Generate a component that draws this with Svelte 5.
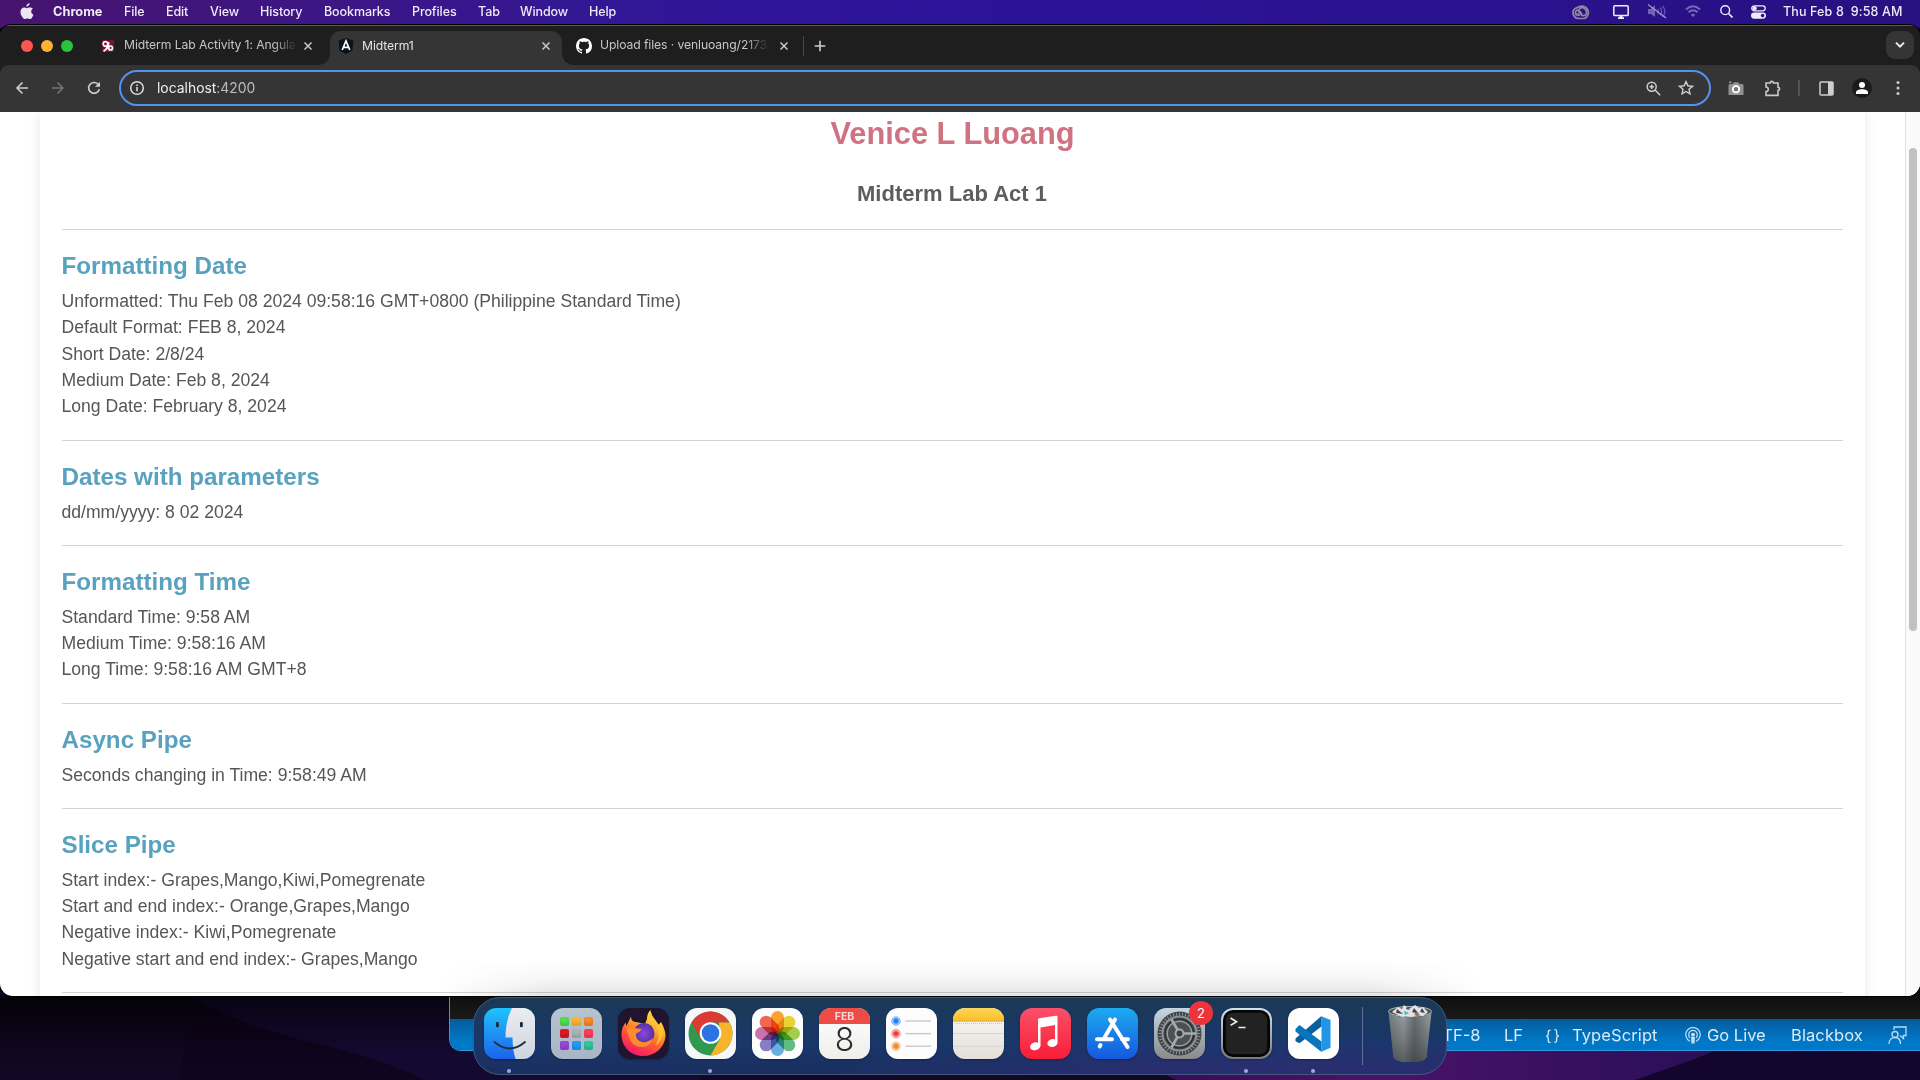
<script>
  const menus = ['File', 'Edit', 'View', 'History', 'Bookmarks', 'Profiles', 'Tab', 'Window', 'Help'];

  const sections = [
    {
      title: 'Formatting Date',
      lines: [
        'Unformatted: Thu Feb 08 2024 09:58:16 GMT+0800 (Philippine Standard Time)',
        'Default Format: FEB 8, 2024',
        'Short Date: 2/8/24',
        'Medium Date: Feb 8, 2024',
        'Long Date: February 8, 2024'
      ]
    },
    { title: 'Dates with parameters', lines: ['dd/mm/yyyy: 8 02 2024'] },
    {
      title: 'Formatting Time',
      lines: ['Standard Time: 9:58 AM', 'Medium Time: 9:58:16 AM', 'Long Time: 9:58:16 AM GMT+8']
    },
    { title: 'Async Pipe', lines: ['Seconds changing in Time: 9:58:49 AM'] },
    {
      title: 'Slice Pipe',
      lines: [
        'Start index:- Grapes,Mango,Kiwi,Pomegrenate',
        'Start and end index:- Orange,Grapes,Mango',
        'Negative index:- Kiwi,Pomegrenate',
        'Negative start and end index:- Grapes,Mango'
      ]
    }
  ];

  const petals = ['#ff9a1f', '#e9d21c', '#9ccb3c', '#4fb878', '#58a8e0', '#7d6fc0', '#c565a5', '#f2583e'];
  const pads = ['#4fe04a', '#ffb52e', '#f98a25', '#d81a26', '#a9b3b8', '#ff3b5c', '#9a45d8', '#1e9bf5', '#2cc79c'];
  const teeth = Array.from({ length: 40 }, (_, i) => i * 9);
</script>

{#snippet closeIcon()}
  <svg class="close" width="10" height="10" viewBox="0 0 10 10"><path d="M1.5 1.5l7 7M8.5 1.5l-7 7" stroke="#c9c9c9" stroke-width="1.5" fill="none" /></svg>
{/snippet}

<div class="desktop">
  <svg class="wallpaper" width="1920" height="84" viewBox="0 0 1920 84">
    <defs>
      <linearGradient id="wl" x1="0" y1="0" x2="0" y2="1"><stop offset="0" stop-color="#0c0518" /><stop offset="1" stop-color="#130725" /></linearGradient>
      <linearGradient id="wp" x1="0" y1="0" x2="1" y2="0"><stop offset="0" stop-color="#2b0c48" /><stop offset=".45" stop-color="#4b126a" /><stop offset="1" stop-color="#240e55" /></linearGradient>
      <linearGradient id="ws" x1="0" y1="0" x2="0" y2="1"><stop offset="0" stop-color="#000" stop-opacity=".65" /><stop offset=".7" stop-color="#000" stop-opacity="0" /></linearGradient>
    </defs>
    <rect width="1920" height="84" fill="url(#wl)" />
    <path d="M190 0 Q240 30 310 46 T425 84 H180 Z" fill="#0f041a" opacity=".6" />
    <path d="M190 0 Q240 30 310 46 T425 84 H700 V0 Z" fill="#140930" />
    <rect width="1920" height="84" fill="url(#ws)" />
    <path d="M1160 76 Q1120 40 1060 20 L1760 20 L1710 57 Q1680 69 1636 84 H1176 Z" fill="url(#wp)" />
    <path d="M1720 55 H1920 V84 H1636 Q1680 68 1720 55Z" fill="#14052e" />
  </svg>

  <header class="menubar">
    <svg class="apple" width="14" height="17" viewBox="0 0 14 17"><path fill="#ece4f5" d="M9.6 0c.1 1-.3 1.9-.9 2.6-.6.7-1.4 1.2-2.3 1.1C6.300 2.800 6.800 1.900 7.300 1.300 7.900.6 8.900.1 9.600 0zM12.900 5.700c-1.200.8-1.700 1.700-1.700 2.900 0 1.500.9 2.600 2.200 3.100-.3.900-.8 1.900-1.400 2.700-.6.9-1.200 1.700-2.200 1.700-.9 0-1.300-.6-2.500-.6s-1.600.6-2.500.6-1.600-.9-2.300-1.800C1.200 12.600.5 10.800.5 9 .5 6.200 2.300 4.600 4.100 4.600c1.100 0 1.900.7 2.700.7.700 0 1.700-.7 3-.7 1.200 0 2.400.4 3.100 1.100z" /></svg>
    <strong>Chrome</strong>
    {#each menus as item}<span class={['menu', item.toLowerCase()]}>{item}</span>{/each}
    <div class="status">
      <svg width="20" height="16" viewBox="0 0 20 16"><g fill="none" stroke="#94899f" stroke-width="1.7"><path d="M6.500 14.500A5.800 5.800 0 0 1 2 5.500C4 3.500 5.500 3.500 6.500 3A6.500 6.500 0 1 1 12.500 14.500Z" /><path d="M5 11.500A3 3 0 0 1 5 6.200c2.500-.6 3 2 5 4M8 11.500c-1.700 0-2.500-1-2.500-2.200M7 5.500c1.500-2.500 5-2.500 7 .5 1 2 1 3.500-.5 5-1.500 1-3.500.7-4.700-.8L6.500 7.500" /></g></svg>
      <svg class="display" width="16" height="14" viewBox="0 0 16 14"><rect x=".8" y=".8" width="14.400" height="9.800" rx="1.200" fill="none" stroke="#f0edfa" stroke-width="1.500" /><path d="M6.500 10.500h3v1.800h1.500V14h-6v-1.700h1.500z" fill="#f0edfa" /></svg>
      <svg class="mute" width="20" height="15" viewBox="0 0 20 15"><path d="M1 5h3l4-4v12L4 10H1z" fill="#7162b5" /><path d="M10.500 5q2 2.500 0 5M13 3.500q3.500 4 0 8M15.500 2q5 5.500 0 11" stroke="#6253ac" stroke-width="1.400" fill="none" /><path d="M1 .5l18 13.500" stroke="#a49bd0" stroke-width="1.200" /></svg>
      <svg class="wifi" width="16" height="13" viewBox="0 0 16 13"><path d="M1 4.500Q8-1.800 15 4.500M3.500 7.300q4.500-4 9 0" stroke="#7768bb" stroke-width="1.900" fill="none" /><path d="M5.700 9.700q2.300-2 4.600 0L8 12z" fill="#7768bb" /></svg>
      <svg class="search" width="13" height="13" viewBox="0 0 13 13"><circle cx="5.200" cy="5.200" r="4.400" stroke="#f0edfa" stroke-width="1.400" fill="none" /><path d="M8.500 8.500l4 4" stroke="#f0edfa" stroke-width="1.600" /></svg>
      <svg class="control" width="15" height="14" viewBox="0 0 15 14"><rect x=".8" y=".8" width="13.400" height="5" rx="2.500" stroke="#f0edfa" stroke-width="1.300" fill="none" /><circle cx="3.700" cy="3.300" r="2" fill="#f0edfa" /><rect x="0" y="7.500" width="15" height="6.200" rx="3.100" fill="#f0edfa" /><circle cx="11.600" cy="10.600" r="1.800" fill="#29128e" /></svg>
      <span class="clock">Thu Feb 8&nbsp; 9:58 AM</span>
    </div>
  </header>

  <div class="editor">
    <div class="terminal"></div>
    <footer>
      <span class="enc">UTF-8</span>
      <span class="lf">LF</span>
      <span class="braces">{'{ }'}</span>
      <span class="lang">TypeScript</span>
      <svg class="live" width="16" height="17" viewBox="0 0 16 17"><g fill="none" stroke="#c7deef" stroke-width="1.200"><path d="M5 14.200a7.200 7.200 0 1 1 6 0" /><path d="M5 10.800a4.300 4.300 0 1 1 6 0" /></g><circle cx="8" cy="7.700" r="2" fill="#c7deef" /><path d="M6 10h4l-.5 6.500h-3z" fill="#c7deef" /></svg>
      <span class="golive">Go Live</span>
      <span class="blackbox">Blackbox</span>
      <svg class="feedback" width="19" height="19" viewBox="0 0 19 19" fill="none" stroke="#bfd9ee" stroke-width="1.300"><path d="M6 4V1h12v8.500h-2.500v3L12 9.500" /><circle cx="7" cy="8.500" r="3" /><path d="M1 18c0-4 2.500-6.500 6-6.500s5.500 2.500 5.500 6.500" /></svg>
    </footer>
  </div>

  <main class="browser">
    <div class="tabstrip">
      <div class="lights"><i class="red"></i><i class="amber"></i><i class="green"></i></div>
      <div class="tab first">
        <svg width="12" height="12" viewBox="0 0 12 12"><rect width="12" height="12" rx="1" fill="#7c1033" /><g fill="none" stroke="#fff" stroke-width="1.700"><circle cx="3.500" cy="4" r="2.300" /><path d="M5.800 3.500C6 7.500 4 10 1.500 11.300M6.500 2v7" /><circle cx="8.500" cy="8" r="2" /></g></svg>
        <span class="title faded">Midterm Lab Activity 1: Angula</span>
        {@render closeIcon()}
      </div>
      <div class="tab active">
        <svg width="16" height="16" viewBox="0 0 16 16"><path d="M8 0l7.500 2.700-1.200 10L8 16l-6.300-3.300-1.200-10z" fill="#07131f" /><path d="M4.200 12L8 3l3.800 9M5.500 9.300h5" fill="none" stroke="#fff" stroke-width="1.700" /></svg>
        <span class="title">Midterm1</span>
        {@render closeIcon()}
      </div>
      <div class="tab third">
        <svg width="16" height="16" viewBox="0 0 16 16"><path fill="#fff" d="M8 0C3.580 0 0 3.580 0 8c0 3.540 2.290 6.530 5.470 7.590.4.070.550-.170.550-.380 0-.190-.010-.820-.010-1.490-2.010.370-2.530-.490-2.690-.940-.090-.230-.480-.940-.820-1.130-.280-.150-.680-.520-.010-.530.630-.010 1.080.580 1.230.820.720 1.210 1.870.870 2.330.660.070-.520.280-.870.510-1.070-1.780-.200-3.640-.890-3.640-3.950 0-.870.310-1.590.820-2.150-.080-.200-.360-1.020.080-2.120 0 0 .670-.210 2.200.820.640-.180 1.320-.270 2-.270s1.360.090 2 .270c1.530-1.040 2.200-.820 2.200-.820.440 1.100.160 1.920.080 2.120.510.560.820 1.270.820 2.150 0 3.070-1.870 3.750-3.650 3.950.290.250.540.730.540 1.480 0 1.070-.010 1.930-.010 2.200 0 .210.150.460.550.380A8.010 8.010 0 0 0 16 8c0-4.420-3.580-8-8-8z" /></svg>
        <span class="title faded">Upload files · venluoang/2173</span>
        {@render closeIcon()}
      </div>
      <i class="sep"></i>
      <svg class="plus" width="12" height="12" viewBox="0 0 12 12"><path d="M6 .7v10.600M.7 6h10.600" stroke="#d0d0d0" stroke-width="1.600" /></svg>
      <div class="chevron"><svg width="12" height="8" viewBox="0 0 12 8"><path d="M2 1.700l4 4 4-4" fill="none" stroke="#eee" stroke-width="1.900" /></svg></div>
    </div>

    <div class="toolbar">
      <div class="slot"><svg width="14" height="14" viewBox="0 0 14 14"><path d="M13 7H2M7.500 1.500L2 7l5.500 5.500" fill="none" stroke="#cfcfcf" stroke-width="1.600" /></svg></div>
      <div class="slot"><svg width="14" height="14" viewBox="0 0 14 14"><path d="M1 7h11M6.500 1.500L12 7l-5.500 5.500" fill="none" stroke="#737373" stroke-width="1.600" /></svg></div>
      <div class="slot"><svg width="14" height="14" viewBox="0 0 14 14"><path d="M12.300 8.200A5.400 5.400 0 1 1 11 3.200l1.200 1.300" fill="none" stroke="#cfcfcf" stroke-width="1.600" /><path d="M13 .7v5H8z" fill="#cfcfcf" /></svg></div>
      <div class="omnibox">
        <svg width="16" height="16" viewBox="0 0 16 16"><circle cx="8" cy="8" r="6.300" fill="none" stroke="#dcdcdc" stroke-width="1.500" /><path d="M8 7v4.300M8 4.400v1.600" stroke="#dcdcdc" stroke-width="1.600" /></svg>
        <p><b>localhost</b>:4200</p>
        <svg width="15" height="15" viewBox="0 0 15 15"><circle cx="5.700" cy="5.700" r="4.500" fill="none" stroke="#cfcfcf" stroke-width="1.500" /><path d="M9 9l5.200 5.200M3.500 5.700h4.400M5.700 3.500v4.400" stroke="#cfcfcf" stroke-width="1.500" /></svg>
        <svg class="star" width="16" height="16" viewBox="0 0 16 16"><path d="M8 1.600l1.900 4.200 4.600.5-3.500 3 1 4.600L8 11.500l-4 2.400 1-4.600-3.500-3 4.600-.5z" fill="none" stroke="#d0d0d0" stroke-width="1.400" /></svg>
      </div>
      <div class="slot camera"><svg width="16" height="15" viewBox="0 0 16 15"><path d="M2 3h2.500l1.300-1.700h4.400L11.500 3H14q1.500 0 1.500 1.500V14H.5V4.500Q.5 3 2 3zM1 .5h2.500v1.700H1z" fill="#929292" /><circle cx="8" cy="8.200" r="3.200" fill="#777" stroke="#fff" stroke-width="1.900" /></svg></div>
      <div class="slot"><svg width="18" height="17" viewBox="0 0 18 17"><path d="M2 3h4.200a1.600 1.600 0 0 1 3.200 0H14v4.200a1.600 1.600 0 0 1 0 3.200v5H2v-3.800a2.200 2.200 0 0 0 0-4.600z" fill="none" stroke="#c9c9c9" stroke-width="1.600" /></svg></div>
      <i class="divider"></i>
      <div class="slot"><svg width="15" height="15" viewBox="0 0 15 15"><rect x="1" y="1" width="13" height="13" rx="1" fill="none" stroke="#cfcfcf" stroke-width="1.500" /><path d="M9 1h5v13H9z" fill="#cfcfcf" /></svg></div>
      <div class="slot"><svg width="20" height="20" viewBox="0 0 20 20"><circle cx="10" cy="10" r="10" fill="#1b1b1b" /><circle cx="10" cy="7" r="3" fill="#fff" /><path d="M4 16v-1.500c0-2 3-3.200 6-3.200s6 1.200 6 3.200V16z" fill="#fff" /></svg></div>
      <div class="slot"><svg width="4" height="16" viewBox="0 0 4 16" fill="#cfcfcf"><circle cx="2" cy="2.500" r="1.500" /><circle cx="2" cy="8" r="1.500" /><circle cx="2" cy="13.500" r="1.500" /></svg></div>
    </div>

    <div class="viewport">
      <article>
        <h1>Venice L Luoang</h1>
        <h3>Midterm Lab Act 1</h3>
        {#each sections as section}
          <section>
            <h2>{section.title}</h2>
            {#each section.lines as line}<p>{line}</p>{/each}
          </section>
        {/each}
      </article>
      <div class="scrollbar"><i></i></div>
    </div>
  </main>

  <div class="dockshade"></div>
  <nav class="dock">
    <div class="app running">
      <svg width="51" height="51" viewBox="0 0 51 51">
        <defs>
          <clipPath id="tile"><rect width="51" height="51" rx="12" /></clipPath>
          <linearGradient id="fb" x2="0" y2="1"><stop stop-color="#1fc3fb" /><stop offset="1" stop-color="#1b63ee" /></linearGradient>
          <linearGradient id="fw" x2="0" y2="1"><stop stop-color="#ececf1" /><stop offset="1" stop-color="#cdd5e0" /></linearGradient>
        </defs>
        <g clip-path="url(#tile)"><rect width="51" height="51" fill="url(#fb)" /><path d="M28 0C23 10 21.500 20 21.500 29.500H28.500C28.500 37 29.500 45 31.500 51H51V0Z" fill="url(#fw)" /></g>
        <rect x="12" y="14" width="2.800" height="5.200" rx="1" fill="#1c2835" /><rect x="36" y="14" width="2.800" height="5.200" rx="1" fill="#1c2835" />
        <path d="M10.500 34Q25.500 47 41 34" fill="none" stroke="#223040" stroke-width="1.900" stroke-linecap="round" />
      </svg>
    </div>
    <div class="app launchpad">{#each pads as color}<i style:background={color}></i>{/each}</div>
    <div class="app">
      <svg width="51" height="51" viewBox="0 0 51 51">
        <defs>
          <linearGradient id="ff" x1=".8" y1="0" x2=".3" y2="1"><stop stop-color="#fff04a" /><stop offset=".35" stop-color="#ffb02a" /><stop offset=".65" stop-color="#ff5634" /><stop offset="1" stop-color="#f5156c" /></linearGradient>
          <radialGradient id="fp"><stop stop-color="#8b47dc" /><stop offset="1" stop-color="#5232a8" /></radialGradient>
        </defs>
        <rect width="51" height="51" rx="12" fill="#20142f" />
        <path d="M25 48C12 48 3.500 38 3.500 26.500 3.500 20 6 17 7.500 14.500L8.500 18 13 8.500C13 13 16 14 18 14L27 16 29 11C29 6 31 3.500 32.500 2 33 9 38 11 40.500 17L43 14C46 19 47.500 24 47.500 28 46.500 40 37 48 25 48Z" fill="url(#ff)" />
        <circle cx="26" cy="25.500" r="10.500" fill="url(#fp)" />
        <path d="M8 20Q11 18 16 20L24 21Q22 24 18 25.500 17 32 24 34 30 35 35 30 32 40 22 39 13 37 11 29Z" fill="#ff8b2c" />
        <path d="M31 8q3 5 7 10 6 10-1 20 7-5 8-13-1-7-5-9-6-6-7-12-2 2-2 4" fill="#ffc337" />
      </svg>
    </div>
    <div class="app running">
      <svg width="51" height="51" viewBox="0 0 51 51">
        <rect width="51" height="51" rx="12" fill="#f5f6f8" />
        <circle cx="25.500" cy="25.500" r="22" fill="#2f9950" />
        <path d="M6.450 14.500A22 22 0 0 1 44.550 14.500H25.500L16 31Z" fill="#dc3a32" />
        <path d="M44.550 14.500A22 22 0 0 1 25.500 47.500L35 31 34 14.500Z" fill="#f9b42d" />
        <circle cx="25.500" cy="25" r="10.800" fill="#fff" /><circle cx="25.500" cy="25" r="8.800" fill="#2a73e0" />
      </svg>
    </div>
    <div class="app">
      <svg width="51" height="51" viewBox="0 0 51 51"><rect width="51" height="51" rx="12" fill="#fcfcfc" /><g class="petals">{#each petals as color, i}<rect x="19" y="3" width="13" height="22.500" rx="6.500" fill={color} transform="rotate({i * 45} 25.5 25.5)" />{/each}</g></svg>
    </div>
    <div class="app calendar"><b>FEB</b><span>8</span></div>
    <div class="app">
      <svg width="51" height="51" viewBox="0 0 51 51"><rect width="51" height="51" rx="12" fill="#fdfdfd" />
        {#each ['#2383f5', '#f23d3c', '#f08a2a'] as color, i}<circle cx="10" cy={13 + i * 12.6} r="4.300" fill={color} fill-opacity=".35" stroke={color} stroke-opacity=".6" stroke-width=".8" /><circle cx="10" cy={13 + i * 12.6} r="2.700" fill={color} /><path d="M19.500 {13 + i * 12.6}H45" stroke="#c9c9c9" stroke-width="1.400" />{/each}
      </svg>
    </div>
    <div class="app">
      <svg width="51" height="51" viewBox="0 0 51 51">
        <defs><linearGradient id="nt" x2="0" y2="1"><stop stop-color="#fdd65b" /><stop offset="1" stop-color="#fcbc25" /></linearGradient><linearGradient id="nb" x2="0" y2="1"><stop stop-color="#faf9f7" /><stop offset="1" stop-color="#e4dfd8" /></linearGradient></defs>
        <g clip-path="url(#tile)"><rect width="51" height="51" fill="url(#nb)" /><rect width="51" height="13" fill="url(#nt)" /><path d="M0 13.300H51" stroke="#b5a888" stroke-width=".8" /><path d="M2 15.500H50" stroke="#c8c4bd" stroke-dasharray="1 1" /><path d="M0 25.500H51M0 38.300H51" stroke="#d3cfc9" stroke-width=".8" /></g>
      </svg>
    </div>
    <div class="app">
      <svg width="51" height="51" viewBox="0 0 51 51">
        <defs><linearGradient id="mu" x2="0" y2="1"><stop stop-color="#fb5069" /><stop offset="1" stop-color="#f91d37" /></linearGradient></defs>
        <rect width="51" height="51" rx="12" fill="url(#mu)" />
        <path d="M18 11.500Q18 10.500 19.200 10.200L36 7.700Q37.500 7.500 37.500 9V34H35V17L20.500 19.500V38H18Z" fill="#fff" /><ellipse cx="15.200" cy="38.300" rx="5.200" ry="3.900" transform="rotate(-15 15.200 38.300)" fill="#fff" /><ellipse cx="32.500" cy="35" rx="5.200" ry="3.900" transform="rotate(-15 32.500 35)" fill="#fff" />
      </svg>
    </div>
    <div class="app">
      <svg width="51" height="51" viewBox="0 0 51 51">
        <defs><linearGradient id="as" x2="0" y2="1"><stop stop-color="#1dabf1" /><stop offset="1" stop-color="#1558df" /></linearGradient></defs>
        <rect width="51" height="51" rx="12" fill="url(#as)" />
        <g stroke="#fff" stroke-width="4" stroke-linecap="round" fill="none"><path d="M28 11.500L17 30.500M23 11.500L40.500 39M10 31.300H25M35 31.300H41M13.500 37L12.700 38.500" /></g>
      </svg>
    </div>
    <div class="app">
      <svg width="51" height="51" viewBox="0 0 51 51">
        <defs><linearGradient id="st" x2="0" y2="1"><stop stop-color="#c5d5df" /><stop offset="1" stop-color="#8b8a89" /></linearGradient></defs>
        <rect width="51" height="51" rx="12" fill="url(#st)" />
        <circle cx="25.500" cy="25.500" r="22" fill="#3f4548" />
        <g stroke="#8f9598" stroke-width="1">{#each teeth as angle}<path d="M25.500 4.500v3" transform="rotate({angle} 25.5 25.5)" />{/each}</g>
        <circle cx="25.500" cy="25.500" r="17" fill="none" stroke="#8f9598" stroke-width="2" />
        <circle cx="25.500" cy="25.500" r="14" fill="#4c5154" stroke="#2e3234" stroke-width="1.500" />
        <circle cx="25.500" cy="25.500" r="12.300" fill="none" stroke="#989da0" stroke-width="1.500" />
        <circle cx="25.500" cy="25.500" r="4" fill="#3a3e40" stroke="#a5abae" stroke-width="2" />
        <path d="M29.500 25.500H42M23.700 22L17.500 11.500M23.700 28.500L17.500 39.500" stroke="#a5abae" stroke-width="2.600" />
      </svg>
      <span class="badge">2</span>
    </div>
    <div class="app running">
      <svg width="51" height="51" viewBox="0 0 51 51">
        <defs><linearGradient id="te" x2="0" y2="1"><stop stop-color="#d5e2ea" /><stop offset="1" stop-color="#777a7e" /></linearGradient></defs>
        <rect width="51" height="51" rx="12" fill="url(#te)" /><rect x="2" y="2" width="47" height="47" rx="10" fill="#050505" /><rect x="4.800" y="4.800" width="41.400" height="41.400" rx="7" fill="#222" />
        <path d="M9.500 10l6 3.700-6 3.700M17.500 19.500h7" fill="none" stroke="#eee" stroke-width="1.700" />
      </svg>
    </div>
    <div class="app running">
      <svg width="51" height="51" viewBox="0 0 51 51">
        <rect width="51" height="51" rx="12" fill="#fff" />
        <path d="M33.500 8.300L42.500 12V39.700L33.500 43.700Z" fill="#2196e8" />
        <path d="M7.500 30.500L33.500 8V18.500L11.500 35.200 7.500 33.200Z" fill="#0a5f9f" />
        <path d="M7.500 21L11.500 17 33.500 33.500V44L7.500 23.500Z" fill="#0876bd" />
      </svg>
    </div>
    <i class="rule"></i>
    <svg class="trash" width="46" height="60" viewBox="0 0 46 60">
      <defs><linearGradient id="tr"><stop stop-color="#737b7e" /><stop offset=".35" stop-color="#9a9fa0" /><stop offset=".6" stop-color="#666c6f" /><stop offset="1" stop-color="#9a9fa1" /></linearGradient><linearGradient id="ts" x2="0" y2="1"><stop stop-color="#444c50" stop-opacity="0" /><stop offset="1" stop-color="#34393b" stop-opacity=".65" /></linearGradient></defs>
      <ellipse cx="23" cy="7.500" rx="21.500" ry="5" fill="#4c5457" stroke="#b5bbbd" />
      <path d="M1.500 8Q5 13 23 13T44.500 8L39.500 53Q38 58 23 58T6.500 53Z" fill="url(#tr)" /><path d="M1.500 8Q5 13 23 13T44.500 8L39.500 53Q38 58 23 58T6.500 53Z" fill="url(#ts)" />
      <path d="M5 8l6-5 4 2 2-4 5 4 6-4 4 3 4-1 5 5-5 4-6-1-5 2-6-1-4 1z" fill="#e1e4e6" /><path d="M10 5l6 5-7-1zM27 4l5 6-7-2zM35 4l3 5-5-1zM20 3l3 3-4-1z" fill="#45464e" /><path d="M17 7l5 2-4 2z" fill="#35b8cf" /><path d="M29 8l4 3-6 0z" fill="#ae6d50" />
    </svg>
  </nav>
</div>

<style>
  :global(body) { margin: 0; overflow: hidden; }
  .desktop { position: relative; width: 1920px; height: 1080px; overflow: hidden; background: #0d051c; font-family: Inter, 'Liberation Sans', sans-serif; }
  .desktop :global(*) { box-sizing: border-box; }
  svg { display: block; flex: none; }
  i { font-style: normal; display: block; }
  .wallpaper { position: absolute; left: 0; bottom: 0; }

  .menubar { display: flex; align-items: center; height: 28px; padding: 0 19px 5px 20px; color: #efe9f8; font-size: 12.500px; font-weight: 500; white-space: nowrap; background: linear-gradient(90deg, #47146e 0, #3d1683 300px, #321795 600px, #2c149a 900px, #29128e 1500px, #27107f 1920px); }
  .menu { margin-right: 20px; letter-spacing: -.1px; }
  .apple { margin: -1px 19px 0 0; }
  .menubar strong { width: 51px; margin-right: 20px; font-weight: 700; font-size: 12.800px; letter-spacing: 0; }
  .file { width: 22px; } .edit { width: 24px; } .view { width: 30px; } .history { width: 44px; }
  .bookmarks { width: 68px; } .profiles { width: 46px; } .menu.tab { display: block; width: 22px; } .window { width: 49px; } .help { width: 28px; }
  .status { display: flex; align-items: center; margin-left: auto; }
  .display { margin-left: 21px; } .mute { margin-left: 18px; } .wifi { margin-left: 18px; } .search { margin-left: 19px; } .control { margin: 0 17px 0 18px; }
  .clock { width: 118px; letter-spacing: .13px; }

  .browser { position: absolute; left: 0; top: 25px; width: 1920px; height: 971px; overflow: hidden; border-radius: 11px 11px 13px 13px; background: #1e1e1e; box-shadow: 0 0 0 1px #000; }
  .tabstrip { display: flex; align-items: center; height: 40px; border-top: 1px solid #5b5b5b; background: #1e1e1e; color: #c6c6c6; font-size: 12.200px; }
  .lights { display: flex; gap: 8px; padding-left: 21px; width: 102px; }
  .lights i { width: 12px; height: 12px; border-radius: 50%; background: #fe5650; }
  .lights .amber { background: #fdb035; } .lights .green { background: #2ac33e; }
  .tab { display: flex; align-items: center; white-space: nowrap; }
  .title { letter-spacing: -.1px; line-height: 18px; margin-top: -1px; }
  .faded { -webkit-mask-image: linear-gradient(90deg, #000 86%, transparent); mask-image: linear-gradient(90deg, #000 86%, transparent); }
  .first { width: 228px; }
  .first .title { width: 173px; margin-left: 10px; }
  .first .close { margin-left: 6px; }
  .active { position: relative; align-self: flex-end; width: 232px; height: 34px; padding: 0 11px 5px 8px; border-radius: 11px 11px 0 0; background: #353535; color: #e4e4e4; }
  .active::before, .active::after { content: ''; position: absolute; bottom: 0; width: 11px; height: 11px; }
  .active::before { left: -11px; background: radial-gradient(circle at 0 0, #1e1e1e 10.500px, #353535 11px); }
  .active::after { right: -11px; background: radial-gradient(circle at 100% 0, #1e1e1e 10.500px, #353535 11px); }
  .active .title { margin: 0 0 0 8px; }
  .active .close { margin-left: auto; }
  .third { padding-left: 14px; }
  .third .title { width: 169px; margin-left: 8px; }
  .third .close { margin-left: 10px; }
  .sep { width: 1px; height: 20px; margin-left: 14px; background: #474747; }
  .plus { margin-left: 10px; }
  .chevron { display: flex; align-items: center; justify-content: center; width: 28px; height: 28px; margin: -1px 6px 0 auto; border-radius: 9px; background: #353535; }
  .toolbar { display: flex; align-items: center; height: 47px; padding: 0 4px 1px; background: #353535; border-radius: 9px 9px 0 0; }
  .slot { display: flex; align-items: center; justify-content: center; width: 36px; flex: none; }
  .slot.camera { margin: 0 1px 0 7px; }
  .divider { width: 2px; height: 16px; margin: 0 8px 0 7px; background: #535353; }
  .omnibox { display: flex; align-items: center; width: 1592px; height: 36px; margin-left: 7px; padding: 0 15px 0 8px; border: 2px solid #5691f1; border-radius: 18px; }
  .omnibox p { flex: 1; margin: -1px 0 0 12px; color: #bdbdbd; font-size: 13.900px; line-height: 20px; }
  .omnibox b { font-weight: 400; color: #eee; }
  .star { margin-left: 17px; }

  .viewport { display: flex; height: 884px; padding-left: 40px; background: #fff; overflow: hidden; font-family: 'Liberation Sans', Arial, sans-serif; }
  article { width: 1825px; height: 960px; padding: 4px 22px 0; color: #565656; font-size: 17.600px; line-height: 26.400px; background: #fff; box-shadow: 0 0 11px rgba(0, 0, 0, .1); }
  h1 { margin: 0; color: #cf7383; font-size: 30.800px; line-height: 35px; text-align: center; }
  h3 { height: 79px; margin: 0; padding-top: 30px; color: #5d5d5d; font-size: 22px; line-height: 25px; text-align: center; text-indent: -1px; border-bottom: 1px solid #d4d4d4; }
  h2 { margin: 0 0 7.800px; color: #58a2bf; font-size: 24.200px; line-height: 28px; text-indent: -.500px; }
  section { padding: 22px 0 19.900px; border-bottom: 1px solid #d4d4d4; }
  section p { margin: 0; white-space: nowrap; text-indent: -.500px; }
  .scrollbar { width: 15px; margin-left: auto; padding: 36px 3px 0; border-left: 1px solid #e3e3e3; background: #fafafa; }
  .scrollbar i { width: 8px; height: 483px; border-radius: 4px; background: #c1c1c1; }

  .editor { position: absolute; left: 449px; top: 990px; width: 1480px; height: 61px; overflow: hidden; border: 1px solid #3597dc; border-width: 0 0 1px 1px; border-radius: 0 0 0 12px; }
  .terminal { height: 29px; background: linear-gradient(#0c0c0c, #1a1a1a); }
  footer { display: flex; align-items: center; height: 32px; padding-left: 980px; color: #dceaf5; font-size: 16.500px; white-space: nowrap; background: linear-gradient(#055c9d, #0078c8 70%); }
  .enc { width: 50px; } .lf { width: 19px; margin-left: 24px; } .braces { width: 17px; margin-left: 22px; font-size: 15px; letter-spacing: -1px; } .lang { width: 88px; margin-left: 10px; letter-spacing: .1px; } .live { margin-left: 25px; } .golive { width: 61px; margin-left: 6px; } .blackbox { width: 74px; margin-left: 23px; letter-spacing: .1px; } .feedback { margin-left: 23px; }

  .dockshade { position: absolute; left: 440px; top: 956px; width: 1040px; height: 40px; background: linear-gradient(rgba(0, 0, 0, 0) 10%, rgba(0, 0, 0, .04) 60%, rgba(0, 0, 0, .11)); -webkit-mask-image: linear-gradient(90deg, transparent, #000 110px, #000 930px, transparent); mask-image: linear-gradient(90deg, transparent, #000 110px, #000 930px, transparent); }
  .dock { position: absolute; left: 473px; top: 997px; width: 974px; height: 78px; display: flex; align-items: flex-start; gap: 16px; padding: 10px 10px 0; border: 1px solid #42597c; border-radius: 27px; background: radial-gradient(ellipse at 85% 130%, rgba(62, 44, 133, .75), transparent 45%), linear-gradient(#1b3954, #19376a 60%, #1b2e60); }
  .app { position: relative; width: 51px; height: 51px; flex: none; border-radius: 12px; box-shadow: 0 1px 2px rgba(0, 0, 0, .3); }
  .running::after { content: ''; position: absolute; left: 23px; bottom: -14px; width: 4px; height: 4px; border-radius: 50%; background: #9fa9dc; }
  .launchpad { display: grid; grid-template-columns: repeat(3, 9px); gap: 3.300px; place-content: center; background: linear-gradient(#b8c3d0, #a9b4c6); }
  .launchpad i { width: 9px; height: 9px; border-radius: 2px; box-shadow: inset 0 -3px 3px rgba(0, 0, 0, .13); }
  .petals rect { mix-blend-mode: multiply; opacity: .9; }
  .calendar { overflow: hidden; text-align: center; background: linear-gradient(#fff, #efeeec); color: #2e2e2e; }
  .calendar b { display: block; height: 16px; color: #f9d6d3; font-size: 10.500px; line-height: 18px; font-weight: 700; background: #ec4b46; }
  .calendar span { display: block; font-size: 32px; line-height: 32px; font-weight: 300; }
  .badge { position: absolute; left: 35px; top: -7px; width: 24px; height: 24px; border-radius: 50%; color: #fff; font-size: 13px; line-height: 24px; text-align: center; background: #ee3339; }
  .rule { width: 1px; height: 58px; margin: -1px 8px 0 7px; background: #5c6d9c; }
  .trash { margin-top: -4px; }
</style>
